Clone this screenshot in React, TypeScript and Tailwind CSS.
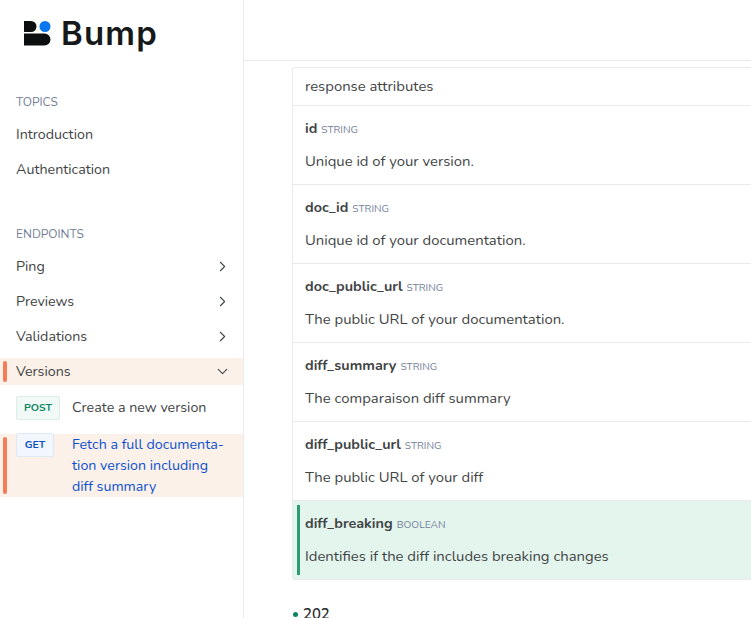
import { ChevronDown, ChevronRight } from "lucide-react";

const fields = [
  { name: "id", type: "STRING", text: "Unique id of your version." },
  { name: "doc_id", type: "STRING", text: "Unique id of your documentation." },
  { name: "doc_public_url", type: "STRING", text: "The public URL of your documentation." },
  { name: "diff_summary", type: "STRING", text: "The comparaison diff summary" },
  { name: "diff_public_url", type: "STRING", text: "The public URL of your diff" },
];

function Logo() {
  return (
    <div className="flex h-[60px] items-start pl-6 pt-[13px]">
      <svg width="27" height="25" viewBox="0 0 27 25" className="mt-[8px]">
        <path d="M0 0h7a5.5 5.5 0 0 1 5.5 5.5v0a5.5 5.5 0 0 1-5.5 5.5H0z" fill="#0c0f0f" />
        <circle cx="21" cy="5.5" r="5.5" fill="#0a76f0" />
        <path d="M0 12.5h20.5a6 6 0 0 1 6 6v0a6 6 0 0 1-6 6H0z" fill="#0c0f0f" />
      </svg>
      <span className="ml-[10px] font-['Inter',sans-serif] text-[33px] leading-[40px] font-semibold tracking-[1.2px] text-[#16191a]">
        Bump
      </span>
    </div>
  );
}

function NavItem({ label, open }: { label: string; open?: boolean }) {
  return (
    <div className="flex h-[35px] items-center justify-between pl-4 pr-3 text-[#3f4445]">
      <span>{label}</span>
      {open === undefined ? null : <ChevronRight size={17} strokeWidth={1.5} />}
    </div>
  );
}

function Sidebar() {
  return (
    <aside className="w-[244px] shrink-0 border-r border-[#e8eaeb] text-[14.25px]">
      <Logo />
      <div className="pt-[33px] pl-4 text-[12px] leading-[18px] text-[#74809a]">TOPICS</div>
      <div className="mt-[6px]">
        <NavItem label="Introduction" />
        <NavItem label="Authentication" />
      </div>
      <div className="pt-[38px] pl-4 text-[12px] leading-[18px] text-[#74809a]">ENDPOINTS</div>
      <div className="mt-[6px]">
        <NavItem label="Ping" open={false} />
        <NavItem label="Previews" open={false} />
        <NavItem label="Validations" open={false} />
      </div>
      <div className="relative mt-[4px] flex h-[27px] items-center justify-between bg-[#fbf1e9] pl-4 pr-3 text-[#3f4445]">
        <span className="absolute top-[3px] left-[3px] h-[21px] w-[4px] rounded-sm bg-[#f47c56]" />
        <span>Versions</span>
        <ChevronDown size={17} strokeWidth={1.5} />
      </div>
      <div className="mt-[11px] flex h-[24px] items-center pl-4">
        <span className="flex h-[24px] w-[44px] items-center justify-center rounded-[2px] border border-[#dceee8] bg-[#f1f9f6] text-[10.5px] font-bold text-[#0c8560]">
          POST
        </span>
        <span className="ml-3 mt-[-1px] text-[#3f4445]">Create a new version</span>
      </div>
      <div className="relative mt-[14px] flex h-[63px] items-start bg-[#fbf1e9] pl-4">
        <span className="absolute top-[3px] left-[3px] h-[57px] w-[4px] rounded-sm bg-[#f47c56]" />
        <span className="mt-[-1px] flex h-[24px] w-[38px] shrink-0 items-center justify-center rounded-[2px] border border-[#dde9f7] bg-[#f1f7fd] text-[10.5px] font-bold text-[#0b50c8]">
          GET
        </span>
        <span className="ml-[18px] w-[155px] leading-[21px] text-[#0b50d0]">
          Fetch a full documenta-tion version including diff summary
        </span>
      </div>
    </aside>
  );
}

function Field({ name, type, text }: { name: string; type: string; text: string }) {
  return (
    <div className="h-[79px] border-t border-[#e8eaeb] px-3 pt-[12px]">
      <div className="flex h-[20px] items-baseline">
        <span className="text-[14.4px] font-bold text-[#3f4445]">{name}</span>
        <span className="ml-1 text-[10.2px] text-[#74809a]">{type}</span>
      </div>
      <div className="mt-[13px] leading-[20px] text-[#3f4445]">{text}</div>
    </div>
  );
}

export default function App() {
  return (
    <div className="flex h-[618px] w-[751px] overflow-hidden bg-white font-['Nunito','Noto_Sans',sans-serif] text-[14.85px]">
      <Sidebar />
      <main className="min-w-0 flex-1">
        <div className="h-[61px] border-b border-[#e8eaeb]" />
        <div className="mt-[6px] ml-[48px] w-[520px] rounded-tl-[3px] rounded-bl-[3px] border border-[#e8eaeb] border-r-0">
          <div className="flex h-[37px] items-center px-3 text-[#3f4445]">response attributes</div>
          {fields.map((f) => (
            <Field key={f.name} {...f} />
          ))}
          <div className="relative h-[79px] border-t border-[#e8eaeb] bg-[#e4f5ee] px-3 pt-[12px]">
            <span className="absolute top-[4px] left-[4px] h-[70px] w-[3px] bg-[#2e9a76]" />
            <div className="flex h-[20px] items-baseline">
              <span className="text-[14.4px] font-bold text-[#3f4445]">diff_breaking</span>
              <span className="ml-1 text-[10.2px] text-[#74809a]">BOOLEAN</span>
            </div>
            <div className="mt-[13px] leading-[20px] text-[#3f4445]">Identifies if the diff includes breaking changes</div>
          </div>
        </div>
        <div className="mt-[24px] ml-[49px] flex h-[20px] items-center">
          <span className="h-[5px] w-[5px] rounded-full bg-[#0c8560]" />
          <span className="ml-[5px] font-semibold text-[#2b2f30]">202</span>
        </div>
      </main>
    </div>
  );
}
